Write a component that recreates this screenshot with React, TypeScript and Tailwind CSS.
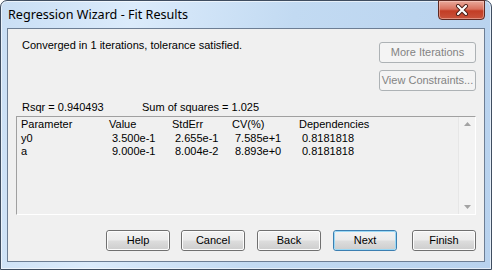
import React from 'react';

const body = { fontFamily: '"Liberation Sans", Arial, sans-serif' };

function Btn({ label, kind = 'normal', w = 'w-[64px]', cls = '' }: { label: string; kind?: 'normal' | 'default' | 'disabled'; w?: string; cls?: string }) {
  if (kind === 'disabled') {
    return (
      <div className={`${w} h-[21px] rounded-[3px] border border-[#adb2b5] bg-[#f4f4f4] flex items-center justify-center text-[11px] text-[#838383]`}>
        {label}
      </div>
    );
  }
  const border = kind === 'default' ? 'border-[#3c7fb1]' : 'border-[#707070]';
  const inner = kind === 'default' ? 'border-[#9ad8f5]' : 'border-[#fcfcfc]';
  return (
    <div className={`${w} ${cls} h-[21px] rounded-[3px] border ${border} overflow-hidden`}>
      <div className={`h-full w-full rounded-[2px] border ${inner} bg-[linear-gradient(#f2f2f2_0%,#ebebeb_48%,#dddddd_52%,#cfcfcf_100%)] flex items-center justify-center text-[11px] text-black`}>
        {label}
      </div>
    </div>
  );
}

const rows = [
  { p: 'y0', v: '3.500e-1', s: '2.655e-1', c: '7.585e+1', d: '0.8181818' },
  { p: 'a', v: '9.000e-1', s: '8.004e-2', c: '8.893e+0', d: '0.8181818' },
];

export default function App() {
  return (
    <div className="w-[492px] h-[270px] bg-white">
      <div className="w-[492px] h-[270px] rounded-t-[7px] border border-[#3f4d60] bg-[linear-gradient(100deg,#c9def4_0%,#dbebfb_25%,#c2daf2_55%,#b8d2ee_100%)] shadow-[inset_0_0_0_1px_rgba(255,255,255,0.6)] flex flex-col">
        {/* Title bar */}
        <div className="relative h-[27px] flex items-center pl-[7px] pt-[2px]">
          <span className="text-[12.6px] text-black" style={{ fontFamily: '"Noto Sans", sans-serif' }}>
            Regression Wizard - Fit Results
          </span>
          <div className="absolute right-[6px] top-[-1px] w-[47px] h-[20px] rounded-b-[4px] border border-[#5e2a23] bg-[linear-gradient(#e9a99b_0%,#d9715e_45%,#c33d25_55%,#c8533c_100%)] shadow-[inset_0_0_0_1px_rgba(255,220,210,0.45)] flex items-center justify-center">
            <svg width="14" height="12" viewBox="0 0 14 12">
              <path d="M3 2 L11 10 M11 2 L3 10" stroke="#4a1d16" strokeWidth="4" strokeLinecap="round" />
              <path d="M3 2 L11 10 M11 2 L3 10" stroke="#ffffff" strokeWidth="2.2" strokeLinecap="round" />
            </svg>
          </div>
        </div>
        {/* Client area */}
        <div className="mx-[6px] h-[234px] border border-[#6d7e94] bg-[#f0f0f0] flex flex-col" style={body}>
          <div className="flex justify-between pt-[13px] pr-[8px]">
            <div className="pl-[14px] mt-[-3px] text-[11px] leading-[13px] text-black">
              Converged in 1 iterations, tolerance satisfied.
            </div>
            <div className="flex flex-col gap-[7px]">
              <Btn label="More Iterations" kind="disabled" w="w-[97px]" />
              <Btn label="View Constraints..." kind="disabled" w="w-[97px]" />
            </div>
          </div>
          <div className="mt-[10px] pl-[14px] flex text-[11px] leading-[13px] text-black">
            <span className="w-[120px]">Rsqr = 0.940493</span>
            <span>Sum of squares = 1.025</span>
          </div>
          <div className="mt-[2px] mx-[8px] h-[99px] border-t border-l border-[#a0a0a0] border-b border-r border-b-white border-r-white flex">
            <div className="flex-1 pl-[4px] pt-[1px] text-[11px] leading-[13.5px] text-black">
              <div className="grid grid-cols-[88px_63px_60px_67px_1fr]">
                <span>Parameter</span>
                <span>Value</span>
                <span>StdErr</span>
                <span>CV(%)</span>
                <span>Dependencies</span>
              </div>
              {rows.map((r) => (
                <div key={r.p} className="grid grid-cols-[88px_63px_60px_67px_1fr]">
                  <span>{r.p}</span>
                  <span className="pl-[3px]">{r.v}</span>
                  <span className="pl-[3px]">{r.s}</span>
                  <span className="pl-[3px]">{r.c}</span>
                  <span className="pl-[3px]">{r.d}</span>
                </div>
              ))}
            </div>
            <div className="w-[17px] border-l border-[#e6e6e6] bg-[#f3f3f3] flex flex-col justify-between items-center py-[5px]">
              <svg width="7" height="4" viewBox="0 0 7 4"><path d="M0 4 L3.5 0 L7 4 Z" fill="#a3a3a3" /></svg>
              <svg width="7" height="4" viewBox="0 0 7 4"><path d="M0 0 L3.5 4 L7 0 Z" fill="#a3a3a3" /></svg>
            </div>
          </div>
          <div className="mt-[15px] pr-[8px] flex justify-end">
            <Btn label="Help" />
            <Btn label="Cancel" cls="ml-[11px]" />
            <Btn label="Back" cls="ml-[12px]" />
            <Btn label="Next" kind="default" cls="ml-[12px]" />
            <Btn label="Finish" cls="ml-[15px]" />
          </div>
        </div>
      </div>
    </div>
  );
}
